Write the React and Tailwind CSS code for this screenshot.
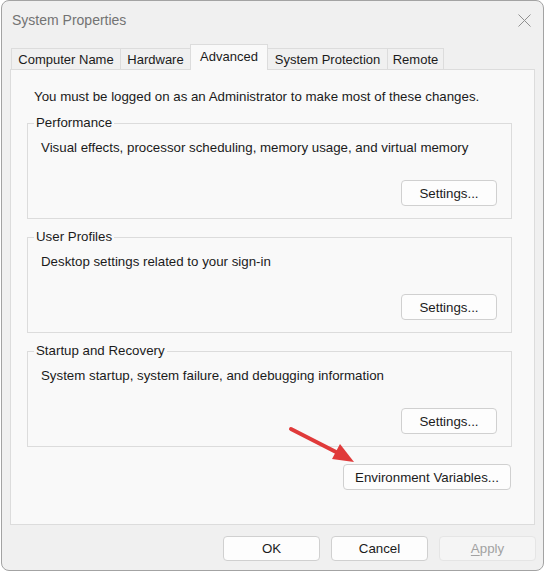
import React from 'react';

const font = { fontFamily: '"Liberation Sans", Arial, sans-serif' };

const Button = ({ children, className = '', disabled = false }) => (
  <button
    type="button"
    disabled={disabled}
    className={`flex items-center justify-center rounded-[4px] border pt-px text-[13.3px] leading-[18px] ${
      disabled
        ? 'border-[#e5e5e5] bg-[#f5f5f5] text-[#a2a2a2]'
        : 'border-[#d0d0d0] bg-[#fdfdfd] text-[#1b1b1b]'
    } ${className}`}
  >
    {children}
  </button>
);

const GroupBox = ({ title, text, className = '' }) => (
  <fieldset className={`h-[105px] border border-[#dcdcdc] ${className}`}>
    <legend className="ml-[6px] px-[2px] text-[13.3px] leading-[18px] text-[#1b1b1b]">{title}</legend>
    <div className="mt-[6px] pl-[13px] pt-px text-[13.3px] leading-[18px] text-[#1b1b1b]">{text}</div>
    <div className="mt-[23px] flex justify-end pr-[14px]">
      <Button className="h-[26px] w-[96px]">Settings...</Button>
    </div>
  </fieldset>
);

const tabs = [
  { label: 'Computer Name', cls: 'w-[109px] h-[21px] border-l border-t pt-px' },
  { label: 'Hardware', cls: 'w-[70px] h-[21px] border-l border-t pt-px' },
  { label: 'Advanced', cls: 'w-[78px] h-[26px] -mb-px border-x border-t bg-[#f9f9f9] relative z-10 pb-px', active: true },
  { label: 'System Protection', cls: 'w-[119px] h-[21px] border-t pt-px' },
  { label: 'Remote', cls: 'w-[57px] h-[21px] border-x border-t pt-px' },
];

export default function App() {
  return (
    <div className="h-[572px] w-[546px] bg-white pl-px" style={font}>
      <div className="relative flex h-[571px] w-[543px] flex-col rounded-[8px] border border-[#a3a3a3] bg-[#f0f0f0]">
        {/* Title bar */}
        <div className="flex h-[41px] items-start justify-between pl-[10px] pr-[12px] pt-[9px]">
          <span className="text-[14px] leading-[20px] text-[#737373]">System Properties</span>
          <svg width="13" height="13" viewBox="0 0 13 13" className="mt-[4px]">
            <path d="M0.5 0.5 L12.5 12.5 M12.5 0.5 L0.5 12.5" stroke="#909090" strokeWidth="1" fill="none" />
          </svg>
        </div>

        {/* Tabs */}
        <div className="ml-[9px] flex h-[27px] items-end">
          {tabs.map((t) => (
            <div
              key={t.label}
              className={`flex items-center justify-center border-[#dcdcdc] text-[13px] leading-[18px] text-[#1b1b1b] ${t.cls}`}
            >
              {t.label}
            </div>
          ))}
        </div>

        {/* Panel */}
        <div className="mx-[8px] flex h-[456px] flex-col border border-[#dcdcdc] bg-[#f9f9f9] pl-[16px] pr-[22px]">
          <div className="mt-[17px] pl-[7px] pt-px text-[13.3px] leading-[18px] text-[#1b1b1b]">
            You must be logged on as an Administrator to make most of these changes.
          </div>
          <GroupBox
            className="mt-[8px]"
            title="Performance"
            text="Visual effects, processor scheduling, memory usage, and virtual memory"
          />
          <GroupBox className="mt-[9px]" title="User Profiles" text="Desktop settings related to your sign-in" />
          <GroupBox
            className="mt-[9px]"
            title="Startup and Recovery"
            text="System startup, system failure, and debugging information"
          />
          <div className="mt-[17px] flex justify-end pr-px">
            <Button className="h-[26px] w-[168px]">Environment Variables...</Button>
          </div>
        </div>

        {/* Dialog buttons */}
        <div className="flex justify-end gap-[11px] pr-[7px] pt-[11px]">
          <Button className="h-[25px] w-[97px]">OK</Button>
          <Button className="h-[25px] w-[97px]">Cancel</Button>
          <Button className="h-[25px] w-[97px]" disabled>
            <span className="underline underline-offset-2">A</span>pply
          </Button>
        </div>

        {/* Red annotation arrow */}
        <svg className="absolute left-[280px] top-[420px]" width="80" height="50" viewBox="280 420 80 50">
          <line x1="289" y1="428" x2="336" y2="452" stroke="#e03a3a" strokeWidth="4" strokeLinecap="round" />
          <polygon points="352,461 330,458 338,443" fill="#e03a3a" />
        </svg>
      </div>
    </div>
  );
}
